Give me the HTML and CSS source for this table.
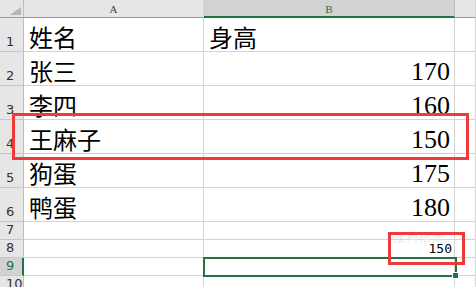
FILE: index.html
```html
<!DOCTYPE html>
<html lang="zh-CN">
<head>
    <meta charset="UTF-8">
    <meta name="viewport" content="width=device-width, initial-scale=1.0">
    <title>身高表</title>
    <link rel="stylesheet" href="styles.css">
</head>
<body>

    <div class="sheet">
        <!-- заголовки столбцов -->
        <div class="corner"><span class="corner-tri"></span></div>
        <div class="col-head">A</div>
        <div class="col-head active">B</div>
        <div class="col-head last"></div>

        <div class="row-head">1</div>
        <div class="cell text">姓名</div>
        <div class="cell text">身高</div>
        <div class="cell"></div>

        <div class="row-head">2</div>
        <div class="cell text">张三</div>
        <div class="cell num">170</div>
        <div class="cell"></div>

        <div class="row-head">3</div>
        <div class="cell text">李四</div>
        <div class="cell num">160</div>
        <div class="cell"></div>

        <div class="row-head">4</div>
        <div class="cell text">王麻子</div>
        <div class="cell num">150</div>
        <div class="cell"></div>

        <div class="row-head">5</div>
        <div class="cell text">狗蛋</div>
        <div class="cell num">175</div>
        <div class="cell"></div>

        <div class="row-head">6</div>
        <div class="cell text">鸭蛋</div>
        <div class="cell num">180</div>
        <div class="cell"></div>

        <div class="row-head small">7</div>
        <div class="cell"></div>
        <div class="cell"></div>
        <div class="cell"></div>

        <div class="row-head small">8</div>
        <div class="cell"></div>
        <div class="cell small-num">150</div>
        <div class="cell"></div>

        <div class="row-head small active">9</div>
        <div class="cell"></div>
        <div class="cell"></div>
        <div class="cell"></div>

        <div class="row-head small">10</div>
        <div class="cell"></div>
        <div class="cell"></div>
        <div class="cell"></div>

        <!-- выделенная ячейка B9 -->
        <div class="selection"></div>
        <div class="fill-handle"></div>

        <!-- водяной знак -->
        <div class="watermark">搜狗指南</div>

        <!-- красные рамки -->
        <div class="mark mark-row"></div>
        <div class="mark mark-cell"></div>
    </div>

</body>
</html>
```

FILE: styles.css
```css
* {
    box-sizing: border-box;
}
body {
    margin: 0;
    background: #fff;
    overflow: hidden;
}
.sheet {
    position: relative;
    display: grid;
    grid-template-columns: 24px 180px 251px 21px;
    grid-template-rows: 18px repeat(6, 34px) repeat(4, 18px);
    width: 476px;
    height: 287px;
    overflow: hidden;
}
.corner {
    position: relative;
    background: #e6e6e6;
    border-right: 1px solid #bdbdbd;
    border-bottom: 1px solid #9b9b9b;
}
.corner-tri {
    position: absolute;
    right: 2px;
    bottom: 2px;
    width: 0;
    height: 0;
    border-left: 11px solid transparent;
    border-bottom: 8px solid #b5b5b5;
}
.col-head {
    background: #e6e6e6;
    border-right: 1px solid #d2d2d2;
    border-bottom: 1px solid #9b9b9b;
    font: 11px "Liberation Serif", serif;
    color: #444;
    text-align: center;
    line-height: 19px;
}
.col-head.active {
    background: #d2d2d2;
    color: #217346;
    border-bottom: 2px solid #217346;
    border-right-color: #bdbdbd;
}
.row-head {
    display: flex;
    align-items: flex-end;
    padding: 0 0 2px 6px;
    background: #e6e6e6;
    border-right: 1px solid #bdbdbd;
    border-bottom: 1px solid #c6c6c6;
    font: 13px "DejaVu Sans", sans-serif;
    color: #333;
    line-height: 14px;
}
.row-head.active {
    background: #d2d2d2;
    color: #217346;
    border-right: 2px solid #217346;
}
.cell {
    display: flex;
    align-items: flex-end;
    border-right: 1px solid #d4d4d4;
    border-bottom: 1px solid #d4d4d4;
    color: #000;
}
.text {
    padding: 0 0 2px 5px;
    font: 24px "Noto Sans CJK SC", sans-serif;
    line-height: 24px;
}
.num {
    justify-content: flex-end;
    padding: 0 4px 0 0;
    font: 26px "Liberation Serif", serif;
    line-height: 26px;
}
.small-num {
    justify-content: flex-end;
    padding: 0 2px 1px 0;
    font: 13px "DejaVu Sans Mono", monospace;
    line-height: 14px;
}
.selection {
    position: absolute;
    left: 203px;
    top: 257px;
    width: 254px;
    height: 20px;
    border: 2px solid #217346;
}
.fill-handle {
    position: absolute;
    left: 452px;
    top: 272px;
    width: 7px;
    height: 7px;
    background: #217346;
    border: 1px solid #fff;
}
.watermark {
    position: absolute;
    left: 393px;
    top: 230px;
    color: #ebebeb;
    font: 12px "Noto Sans CJK SC", sans-serif;
    line-height: 14px;
    letter-spacing: 1px;
}
.mark {
    position: absolute;
    border: 3px solid #f03a3a;
}
.mark-row {
    left: 12px;
    top: 113px;
    width: 457px;
    height: 47px;
}
.mark-cell {
    left: 388px;
    top: 232px;
    width: 77px;
    height: 33px;
}
```
